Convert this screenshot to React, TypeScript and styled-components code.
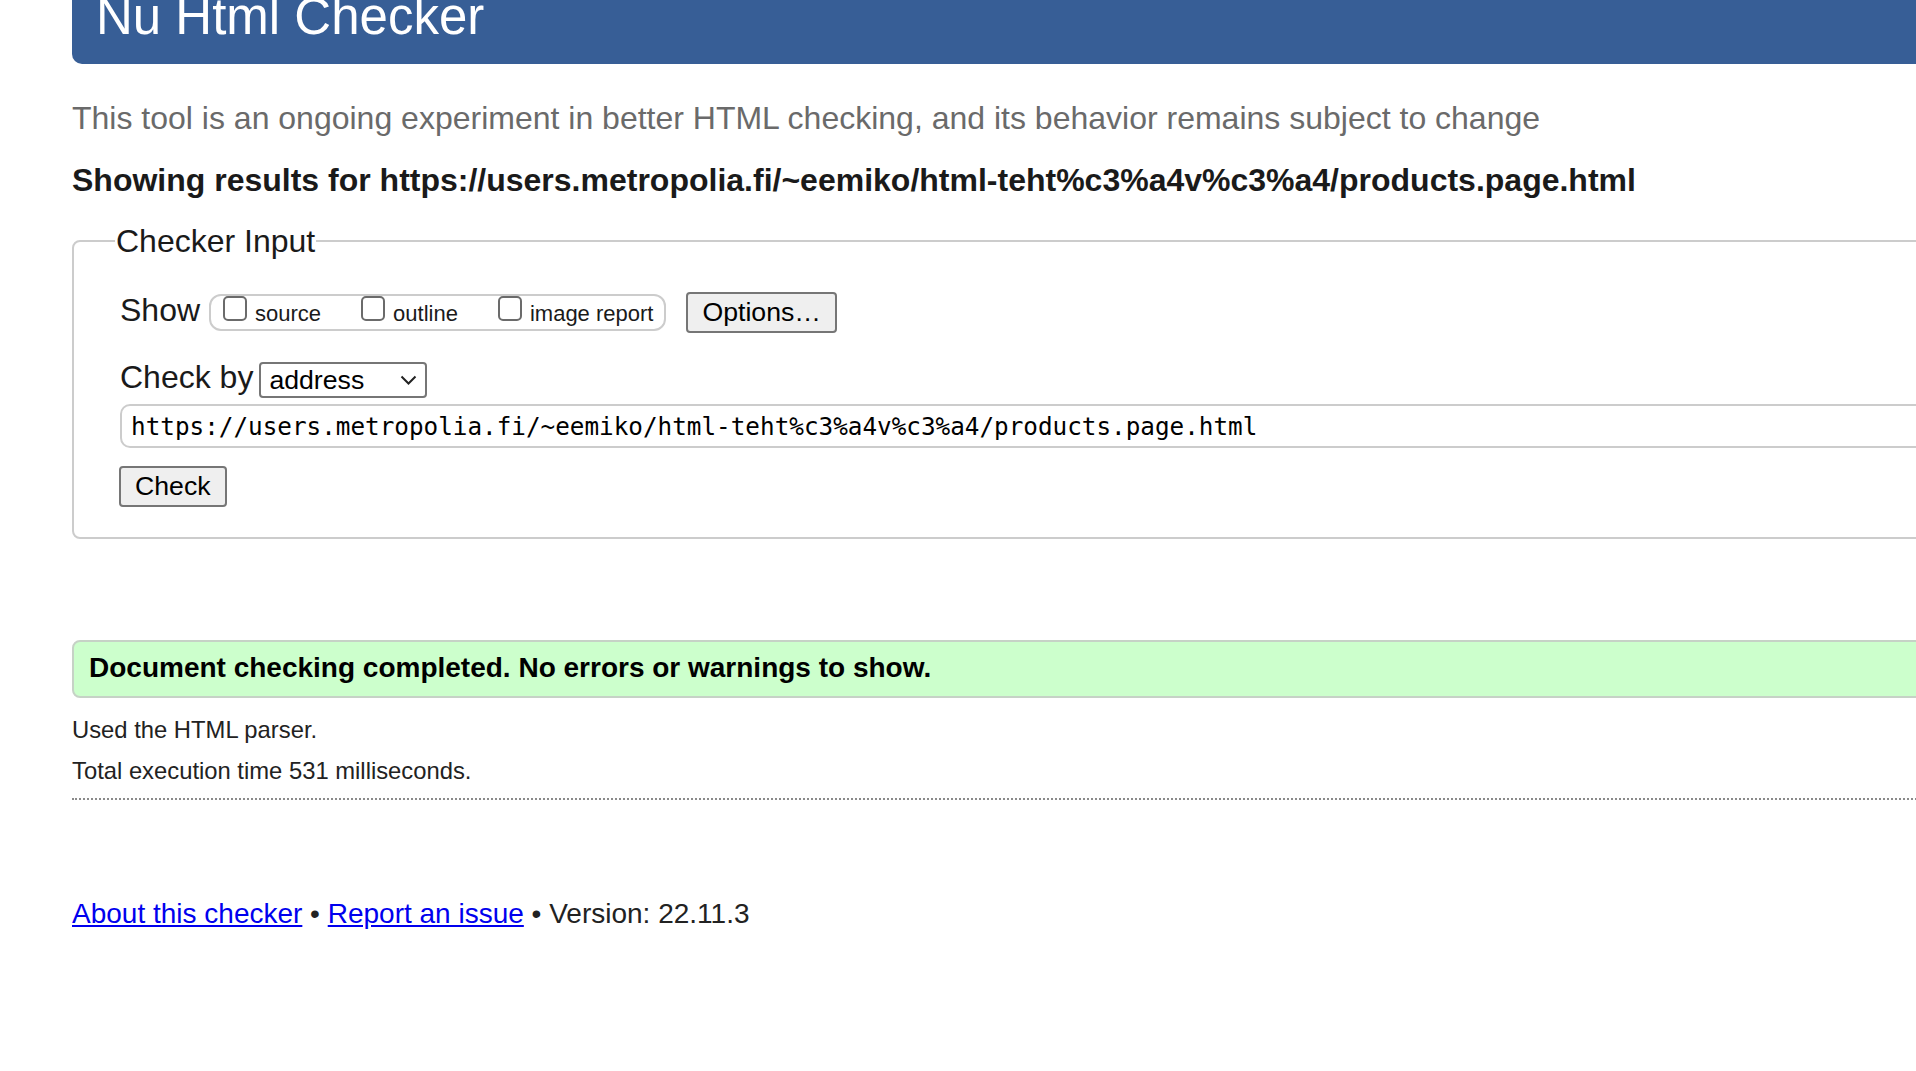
import styled, { createGlobalStyle } from "styled-components";

const GlobalStyle = createGlobalStyle`
  html, body {
    margin: 0;
    padding: 0;
    background: #fff;
    overflow: hidden;
  }
  body {
    font-family: "Liberation Sans", Arial, sans-serif;
    color: #222;
  }
`;

const Page = styled.div`
  width: 2000px;
  padding-left: 72px;
  box-sizing: border-box;
`;

const Banner = styled.h1`
  margin: 0;
  height: 64px;
  padding-left: 24px;
  background: #375e96;
  color: #fff;
  font-size: 51px;
  font-weight: normal;
  line-height: 33px;
  border-bottom-left-radius: 10px;
`;

const Tagline = styled.p`
  margin: 36px 0 0;
  font-size: 32px;
  line-height: 36px;
  color: #6a6a6a;
`;

const ResultsFor = styled.h2`
  margin: 26px 0 0;
  font-size: 32px;
  line-height: 36px;
  font-weight: bold;
  color: #1a1a1a;
`;

const InputSet = styled.fieldset`
  margin: 25px 0 0;
  padding: 33px 0 30px 46px;
  border: 2px solid #cccccc;
  border-radius: 8px;
`;

const SetTitle = styled.legend`
  margin-left: -5px;
  padding: 0 1px;
  font-size: 32px;
  line-height: 36px;
  color: #1a1a1a;
`;

const Row = styled.div<{ $gap?: number }>`
  display: flex;
  align-items: flex-start;
  margin-top: ${(p) => p.$gap ?? 0}px;
`;

const Label = styled.span`
  font-size: 32px;
  line-height: 36px;
  color: #1a1a1a;
`;

const OptionGroup = styled.div`
  display: flex;
  box-sizing: border-box;
  height: 37px;
  margin: 2px 0 0 9px;
  padding: 0 11px 2px 12px;
  border: 2px solid #cccccc;
  border-radius: 12px;
`;

const Option = styled.label`
  display: flex;
  align-items: flex-start;
  &:not(:last-child) {
    margin-right: 40px;
  }
`;

const Tick = styled.input`
  appearance: none;
  margin: 0;
  width: 24px;
  height: 25px;
  box-sizing: border-box;
  border: 2px solid #6b6b6b;
  border-radius: 5px;
  background: #fff;
`;

const OptionText = styled.span`
  margin: 5px 0 0 8px;
  font-size: 22px;
  line-height: 25px;
  color: #1a1a1a;
`;

const Button = styled.button<{ $top?: number; $left?: number }>`
  display: block;
  margin: ${(p) => p.$top ?? 0}px 0 0 ${(p) => p.$left ?? 0}px;
  padding: 3px 14px;
  border: 2px solid #767676;
  border-radius: 4px;
  background: #efefef;
  color: #000;
  font-family: "Liberation Sans", Arial, sans-serif;
  font-size: 26.67px;
  line-height: 31px;
`;

const SelectBox = styled.div`
  display: flex;
  align-items: center;
  justify-content: space-between;
  box-sizing: border-box;
  width: 168px;
  height: 36px;
  margin: 3px 0 0 6px;
  padding: 0 8px;
  border: 2px solid #767676;
  border-radius: 4px;
  background: #fff;
  color: #000;
  font-size: 26.67px;
  line-height: 30px;
`;

const UrlField = styled.input`
  display: block;
  box-sizing: border-box;
  width: 100%;
  height: 44px;
  margin: 6px 0 0;
  padding: 0 9px;
  border: 2px solid #cccccc;
  border-radius: 10px;
  outline: none;
  color: #000;
  font-family: "DejaVu Sans Mono", "Liberation Mono", monospace;
  font-size: 24.3px;
`;

const ResultBox = styled.div`
  margin-top: 101px;
  padding: 10px 15px 12px;
  border: 2px solid #c6d2c6;
  border-radius: 8px;
  background: #ccffcc;
  color: #000;
  font-size: 28px;
  line-height: 32px;
  font-weight: bold;
`;

const Info = styled.p<{ $gap: number }>`
  margin: ${(p) => p.$gap}px 0 0;
  font-size: 23.8px;
  line-height: 27px;
  color: #222;
`;

const Divider = styled.hr`
  margin: 14px 0 0;
  height: 0;
  border: 0;
  border-top: 2px dotted #8a8a8a;
`;

const Footer = styled.p`
  margin: 98px 0 0;
  font-size: 28px;
  line-height: 32px;
  color: #222;
  a {
    color: #0000ee;
  }
`;

function Chevron() {
  return (
    <svg width="17" height="10" viewBox="0 0 17 10" fill="none">
      <path d="M1.5 1.5 L8.5 8.5 L15.5 1.5" stroke="#222" strokeWidth="2" />
    </svg>
  );
}

const url = "https://users.metropolia.fi/~eemiko/html-teht%c3%a4v%c3%a4/products.page.html";

export default function App() {
  return (
    <Page>
      <GlobalStyle />
      <Banner>Nu Html Checker</Banner>
      <Tagline>
        This tool is an ongoing experiment in better HTML checking, and its behavior remains subject to change
      </Tagline>
      <ResultsFor>Showing results for {url}</ResultsFor>
      <InputSet>
        <SetTitle>Checker Input</SetTitle>
        <Row>
          <Label>Show</Label>
          <OptionGroup>
            <Option>
              <Tick type="checkbox" />
              <OptionText>source</OptionText>
            </Option>
            <Option>
              <Tick type="checkbox" />
              <OptionText>outline</OptionText>
            </Option>
            <Option>
              <Tick type="checkbox" />
              <OptionText>image report</OptionText>
            </Option>
          </OptionGroup>
          <Button type="button" $top={0} $left={20}>
            Options…
          </Button>
        </Row>
        <Row $gap={26}>
          <Label>Check by</Label>
          <SelectBox>
            <span>address</span>
            <Chevron />
          </SelectBox>
        </Row>
        <UrlField type="url" value={url} readOnly />
        <Button type="button" $top={18} $left={-1}>
          Check
        </Button>
      </InputSet>
      <ResultBox>Document checking completed. No errors or warnings to show.</ResultBox>
      <Info $gap={18}>Used the HTML parser.</Info>
      <Info $gap={14}>Total execution time 531 milliseconds.</Info>
      <Divider />
      <Footer>
        <a href="#about">About this checker</a> • <a href="#issue">Report an issue</a> • Version: 22.11.3
      </Footer>
    </Page>
  );
}
